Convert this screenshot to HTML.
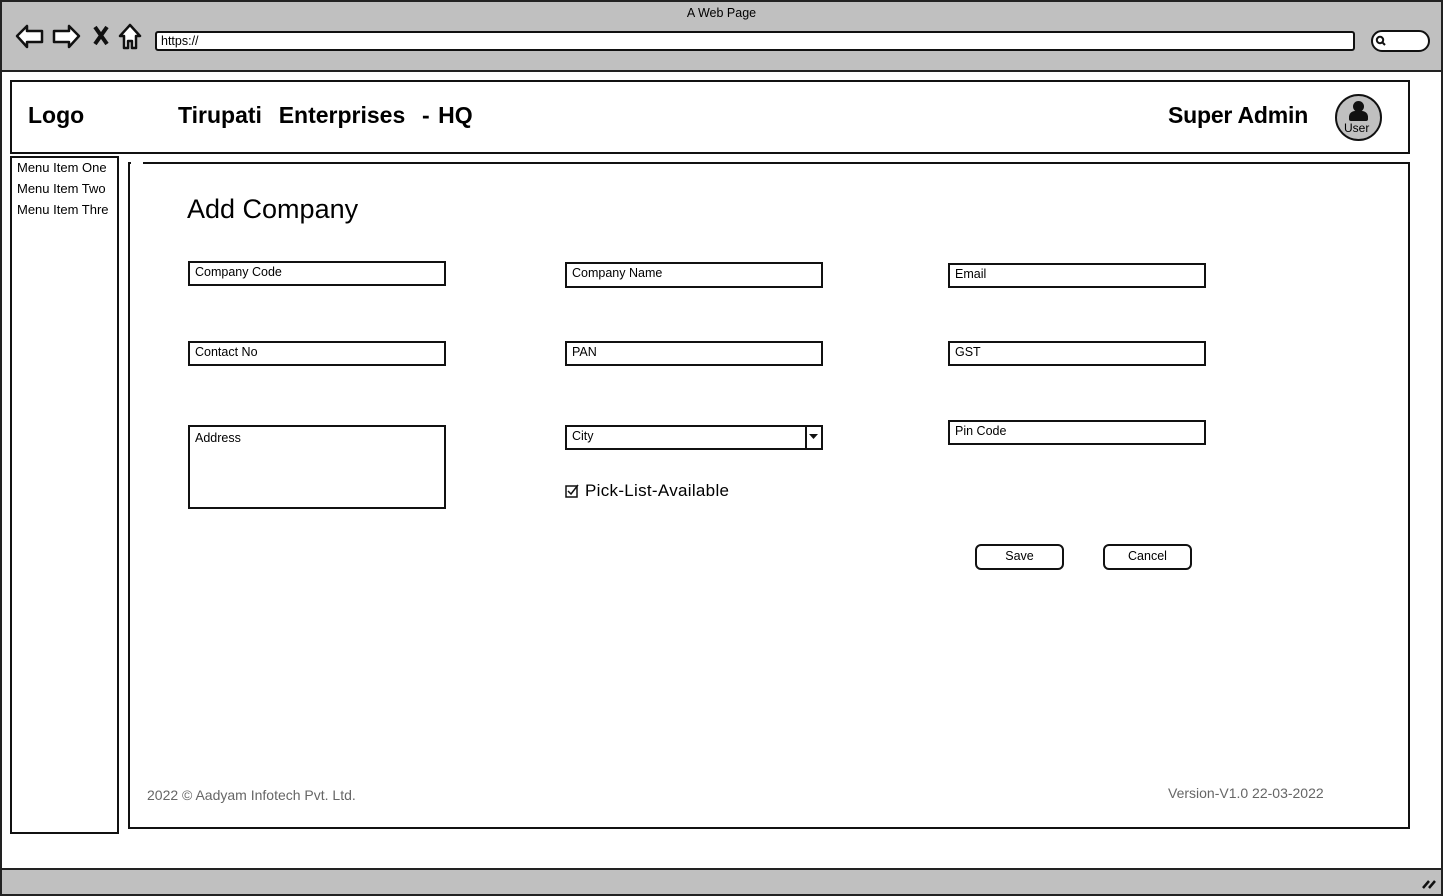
<!DOCTYPE html>
<html><head><meta charset="utf-8"><style>
*{margin:0;padding:0;box-sizing:border-box}
body{width:1443px;height:896px;background:#fff;position:relative;overflow:hidden;font-family:"Liberation Sans",sans-serif;color:#000}
.a{position:absolute}
.box{position:absolute;border:2px solid #111;background:#fff}
.in{position:absolute;border:2px solid #111;border-bottom-width:2.5px;background:#fff;font-size:12.5px;padding:2px 0 0 5px}
.btn{position:absolute;border:2px solid #111;border-radius:6px;background:#fff;font-size:12.5px;text-align:center;line-height:21px}
</style></head><body>
<div class="a" style="left:0;top:0;width:1443px;height:896px;border:2px solid #222;background:#fff"></div>
<div class="a" style="left:2px;top:2px;width:1439px;height:70px;background:#c0c0c0;border-bottom:2px solid #222"></div>
<div class="a" style="left:2px;top:868px;width:1439px;height:26px;background:#c0c0c0;border-top:2px solid #222"></div>
<div class="a" style="left:0;top:6px;width:1443px;text-align:center;font-size:12.5px">A Web Page</div>
<svg class="a" style="left:14px;top:22px" width="130" height="30" viewBox="0 0 130 30" fill="#fff" stroke="#111" stroke-width="2.5" stroke-linejoin="round">
<path d="M3 14 L13 4 L13 9 L28 9 L28 20 L13 20 L13 25 Z"/>
<path d="M65 14 L55 4 L55 9 L40 9 L40 20 L55 20 L55 25 Z"/>
<path d="M81 5 L93 22 M93 5 L81 22" stroke-width="4"/>
<path d="M106 14 L116 3 L126 14 L122 14 L122 26 L118 26 L118 19 L114 19 L114 26 L110 26 L110 14 Z"/>
</svg>
<div class="a" style="left:155px;top:31px;width:1200px;height:20px;border:2px solid #111;border-radius:3px;background:#fff;font-size:12.5px;padding:1px 0 0 4px">https://</div>
<div class="a" style="left:1371px;top:30px;width:59px;height:22px;border:2px solid #111;border-radius:11px;background:#fff"></div>
<svg class="a" style="left:1375px;top:35px" width="12" height="12" viewBox="0 0 12 12" fill="none" stroke="#111" stroke-width="2"><circle cx="5" cy="5" r="3.2"/><path d="M7 7 L10 10"/></svg>
<div class="box" style="left:10px;top:80px;width:1400px;height:74px"></div>
<div class="a" style="left:28px;top:102px;font-size:23px;font-weight:bold">Logo</div>
<div class="a" style="left:178px;top:102px;font-size:23px;font-weight:bold;white-space:pre;word-spacing:2px">Tirupati  Enterprises  - HQ</div>
<div class="a" style="left:1168px;top:102px;font-size:23px;font-weight:bold;letter-spacing:-0.2px">Super Admin</div>
<div class="a" style="left:1335px;top:94px;width:47px;height:47px;border:2.5px solid #111;border-radius:50%;background:#c0c0c0;overflow:hidden">
<div class="a" style="left:16px;top:5px;width:11px;height:11px;border-radius:50%;background:#111"></div>
<div class="a" style="left:12px;top:15px;width:19px;height:10px;border-radius:6px 6px 2px 2px;background:#111"></div>
<div class="a" style="left:7px;top:25px;font-size:12px">User</div></div>
<div class="box" style="left:10px;top:156px;width:109px;height:678px"></div>
<div class="a" style="left:17px;top:157px;font-size:13px;line-height:21px">Menu Item One<br>Menu Item Two<br>Menu Item Thre</div>
<div class="box" style="left:128px;top:162px;width:1282px;height:667px"></div>
<div class="a" style="left:131px;top:160px;width:12px;height:5px;background:#fff"></div>
<div class="a" style="left:187px;top:194px;font-size:27px">Add Company</div>
<div class="in" style="left:188px;top:261px;width:258px;height:25px">Company Code</div>
<div class="in" style="left:565px;top:262px;width:258px;height:26px">Company Name</div>
<div class="in" style="left:948px;top:263px;width:258px;height:25px">Email</div>
<div class="in" style="left:188px;top:341px;width:258px;height:25px">Contact No</div>
<div class="in" style="left:565px;top:341px;width:258px;height:25px">PAN</div>
<div class="in" style="left:948px;top:341px;width:258px;height:25px">GST</div>
<div class="in" style="left:188px;top:425px;width:258px;height:84px;padding-top:4px">Address</div>
<div class="in" style="left:565px;top:425px;width:258px;height:25px">City</div>
<div class="a" style="left:805px;top:426px;width:2px;height:23px;background:#111"></div>
<svg class="a" style="left:809px;top:433px" width="10" height="8"><path d="M0 1 L9 1 L4.5 6 Z" fill="#111"/></svg>
<div class="in" style="left:948px;top:420px;width:258px;height:25px">Pin Code</div>
<svg class="a" style="left:565px;top:484px" width="14" height="14" fill="none" stroke="#111" stroke-width="1.5"><rect x="1" y="2" width="11" height="11"/><path d="M3 7 L6 10 L13 1"/></svg>
<div class="a" style="left:585px;top:481px;font-size:17px;letter-spacing:0.3px">Pick-List-Available</div>
<div class="btn" style="left:975px;top:544px;width:89px;height:26px">Save</div>
<div class="btn" style="left:1103px;top:544px;width:89px;height:26px">Cancel</div>
<div class="a" style="left:147px;top:787px;font-size:14px;color:#666">2022 © Aadyam Infotech Pvt. Ltd.</div>
<div class="a" style="left:1168px;top:785px;font-size:14px;color:#666">Version-V1.0 22-03-2022</div>
<svg class="a" style="left:1421px;top:876px" width="16" height="14" stroke="#111" stroke-width="2.5"><path d="M2 12 L8 5 M8 12 L14 5"/></svg>
</body></html>
